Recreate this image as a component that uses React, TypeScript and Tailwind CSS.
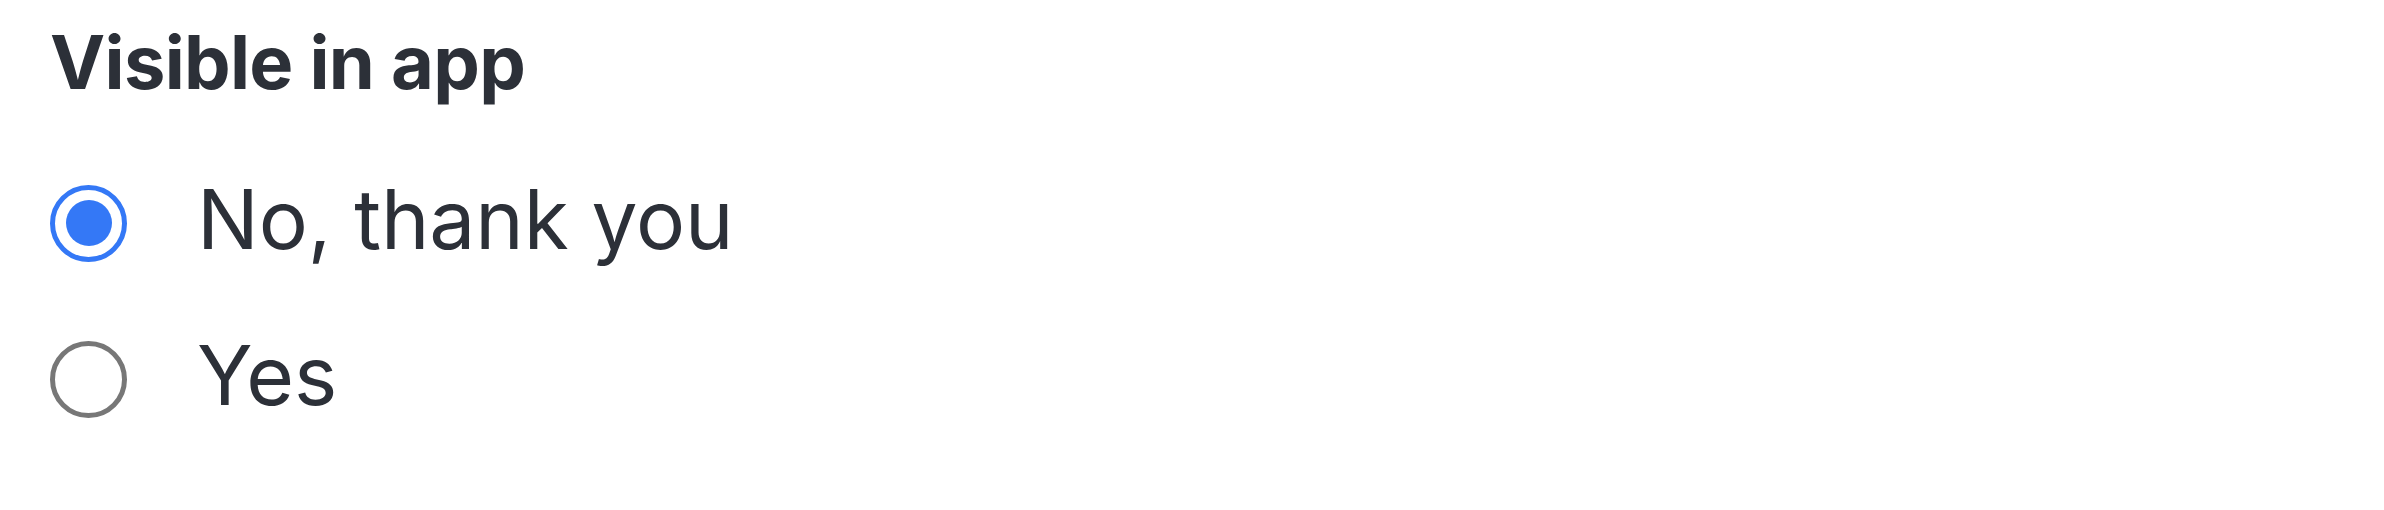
import { useState } from 'react';

const OPTIONS = [
  { value: 'no', label: 'No, thank you' },
  { value: 'yes', label: 'Yes' },
];

export default function App() {
  const [visible, setVisible] = useState('no');

  return (
    <div className="w-[2384px] h-[510px] bg-white pl-[50px] pt-[17px] font-['Inter','Liberation_Sans',sans-serif] text-[#2c3038]">
      <h2 className="text-[74px] leading-[90px] font-bold tracking-[-0.7px]">Visible in app</h2>
      <div className="mt-[66px] flex flex-col gap-[56px]">
        {OPTIONS.map((option) => {
          const checked = visible === option.value;
          return (
            <label
              key={option.value}
              className="flex h-[100px] items-center gap-[70px] cursor-pointer"
              onClick={() => setVisible(option.value)}
            >
              <span
                className={`flex h-[77px] w-[77px] items-center justify-center rounded-full border-[5px] ${
                  checked ? 'border-[#3478f6]' : 'border-[#777777]'
                }`}
              >
                {checked && <span className="h-[46px] w-[46px] rounded-full bg-[#3478f6]" />}
              </span>
              <span className="pb-[6px] text-[82px] leading-[94px] tracking-[-0.1px]">{option.label}</span>
            </label>
          );
        })}
      </div>
    </div>
  );
}
